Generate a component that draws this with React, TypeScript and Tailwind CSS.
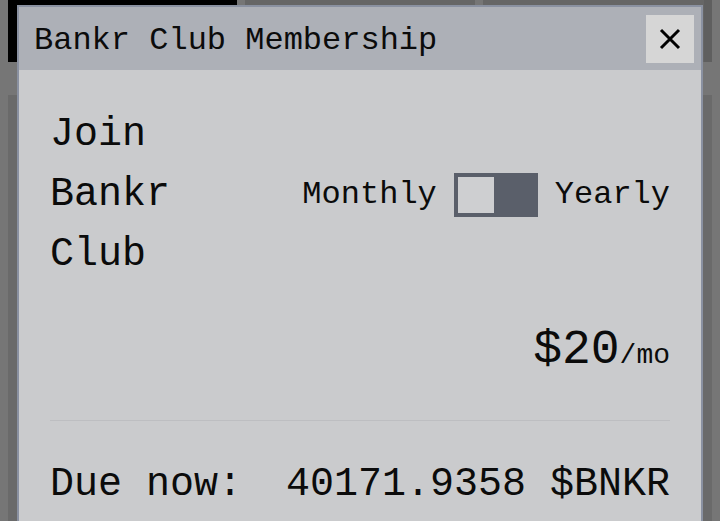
import React from "react";

const mono = { fontFamily: '"Liberation Mono", "DejaVu Sans Mono", monospace' };

export default function App() {
  return (
    <div className="relative w-[720px] h-[521px] overflow-hidden bg-[#767676]" style={mono}>
      {/* dimmed background content */}
      <div className="flex flex-col gap-[33px] pl-[8px]">
        <div className="flex gap-[8px]">
          <div className="w-[229px] h-[62px] bg-black" />
          <div className="w-[230px] h-[62px] bg-[#666666]" />
          <div className="w-[229px] h-[62px] bg-[#666666] border-r-[8px] border-[#5f5f5f]" />
        </div>
        <div className="w-[704px] h-[430px] bg-[#6a6a6a]" />
      </div>

      {/* modal */}
      <div className="absolute left-[17px] top-[5px] w-[686px] border-2 border-[#8a91a1] bg-[#cacbcd] text-[#0b0b0b]">
        <div className="flex h-[63px] items-center justify-between bg-[#adb0b7] pl-[15px] pr-[7px]">
          <span className="pt-[4px] text-[32px] leading-none">Bankr Club Membership</span>
          <button className="flex h-[48px] w-[48px] items-center justify-center bg-[#d6d6d6]">
            <svg width="22" height="22" viewBox="0 0 22 22">
              <path d="M2 2 L20 20 M20 2 L2 20" stroke="#000" strokeWidth="3" />
            </svg>
          </button>
        </div>
        <div className="px-[31px] pt-[35px] pb-[40px]">
          <div className="flex items-center justify-between">
            <div className="flex flex-col text-[40px] leading-[60px]">
              <span>Join</span>
              <span>Bankr</span>
              <span>Club</span>
            </div>
            <div className="flex items-center gap-[17px] text-[32px] leading-none">
              <span>Monthly</span>
              <div className="flex h-[44px] w-[84px] bg-[#5a5f6a] p-[4px]">
                <div className="h-[36px] w-[36px] bg-[#cecfd1]" />
              </div>
              <span>Yearly</span>
            </div>
          </div>
          <div className="mt-[41px] flex items-baseline justify-end leading-none">
            <span className="text-[48px]">$20</span>
            <span className="text-[28px]">/mo</span>
          </div>
          <div className="mt-[46px] h-px bg-[#bdbec1]" />
          <div className="mt-[44px] flex items-baseline justify-between text-[40px] leading-none">
            <span>Due now:</span>
            <span>40171.9358 $BNKR</span>
          </div>
        </div>
      </div>
    </div>
  );
}
